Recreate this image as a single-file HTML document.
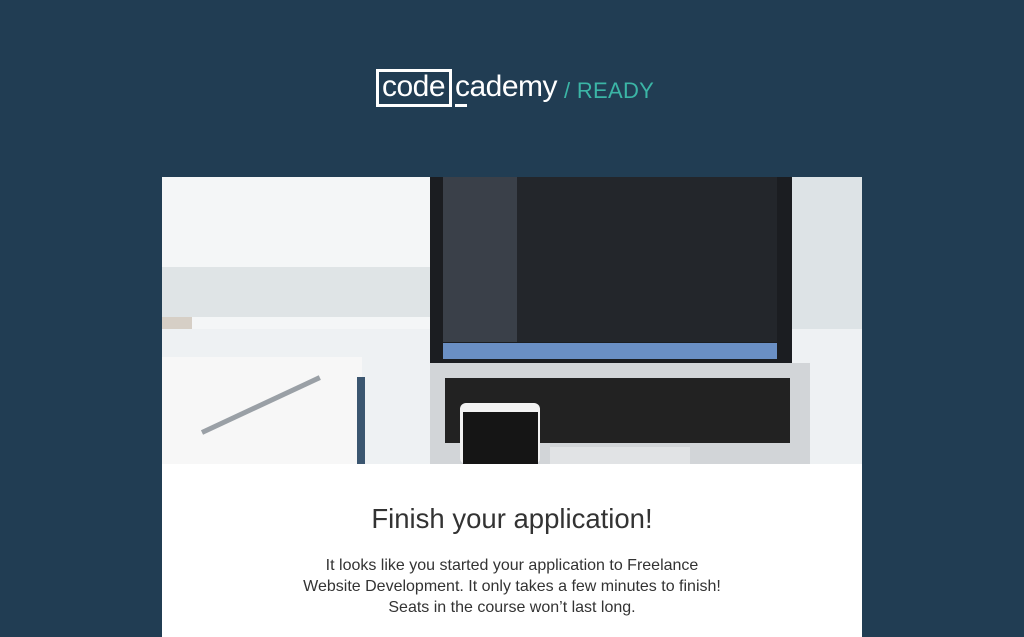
<!DOCTYPE html>
<html><head><style>
body{margin:0;width:1024px;height:630px;background:#213d53;overflow:hidden;font-family:"Liberation Sans",sans-serif;position:relative}
.logo{position:absolute;left:376px;top:69px;height:38px;color:#fff;font-size:30px;letter-spacing:-0.5px}
.box{position:absolute;left:0;top:0;width:76px;height:38px;border:3px solid #fff;box-sizing:border-box}
.card{position:absolute;left:162px;top:177px;width:700px;height:460px;background:#fff}
.img{position:absolute;left:0;top:0;width:700px;height:287px;background:#e9edf0;overflow:hidden}
.a{position:absolute}
h1{position:absolute;top:326px;left:0;width:700px;text-align:center;margin:0;font-weight:300;font-size:27.5px;color:#333}
p{position:absolute;top:378px;left:0;width:700px;text-align:center;margin:0;font-size:16px;line-height:21px;color:#333}
</style></head><body>
<div class="logo">
<div class="box"></div>
<span style="position:absolute;left:6px;top:1px">code</span>
<span style="position:absolute;left:79px;top:1px">cademy</span>
<div class="a" style="left:79px;top:35px;width:12px;height:3px;background:#fff"></div>
<span style="position:absolute;left:188px;top:9px;font-size:22px;color:#3bb5a6;letter-spacing:0.3px;white-space:nowrap">/ READY</span>
</div>
<div class="card">
<div class="img">
<div class="a" style="left:0;top:0;width:270px;height:180px;background:#f4f6f7"></div>
<div class="a" style="left:0;top:90px;width:270px;height:50px;background:#dfe4e6"></div>
<div class="a" style="left:0;top:140px;width:30px;height:20px;background:#d6cfc6"></div>
<div class="a" style="left:630px;top:0;width:70px;height:152px;background:#dde3e6"></div>
<div class="a" style="left:0;top:152px;width:700px;height:135px;background:#eef1f3"></div>
<div class="a" style="left:268px;top:0;width:362px;height:186px;background:#1b1d21"></div>
<div class="a" style="left:281px;top:0;width:74px;height:165px;background:#3a4049"></div>
<div class="a" style="left:355px;top:0;width:260px;height:165px;background:#23262b"></div>
<div class="a" style="left:281px;top:166px;width:334px;height:16px;background:#6a8fc4"></div>
<div class="a" style="left:268px;top:186px;width:380px;height:101px;background:#d2d5d8"></div>
<div class="a" style="left:283px;top:201px;width:345px;height:65px;background:#222"></div>
<div class="a" style="left:388px;top:270px;width:140px;height:17px;background:#e1e3e5"></div>
<div class="a" style="left:298px;top:226px;width:80px;height:61px;background:#f3f3f3;border-radius:6px"></div>
<div class="a" style="left:301px;top:235px;width:75px;height:52px;background:#151515"></div>
<div class="a" style="left:0;top:180px;width:200px;height:107px;background:#f7f7f7"></div>
<div class="a" style="left:195px;top:200px;width:8px;height:87px;background:#3b5670"></div>
<div class="a" style="left:40px;top:253px;width:130px;height:5px;background:#9aa0a6;transform:rotate(-25deg);transform-origin:left center"></div>
</div>
<h1>Finish your application!</h1>
<p>It looks like you started your application to Freelance<br>Website Development. It only takes a few minutes to finish!<br>Seats in the course won’t last long.</p>
</div>
</body></html>
